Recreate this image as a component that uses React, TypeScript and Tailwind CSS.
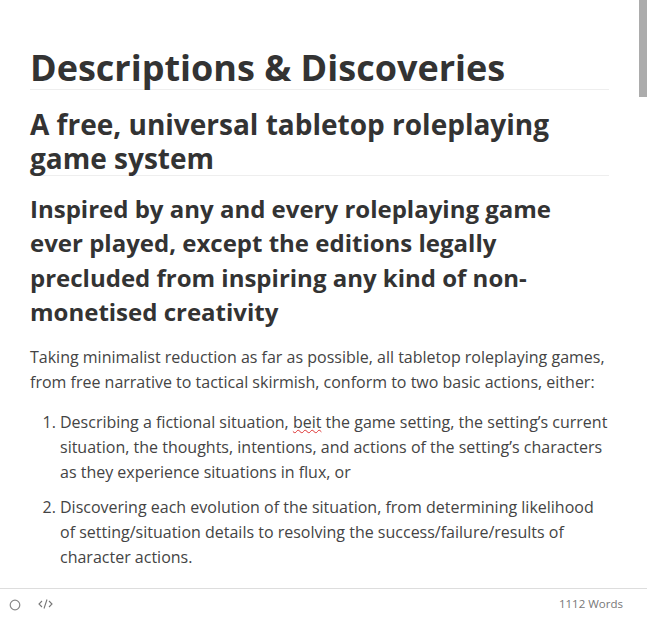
export default function App() {
  return (
    <div className="relative h-[618px] w-[647px] overflow-hidden bg-white flex flex-col font-['Open_Sans',sans-serif] text-[#333333]">
      <div className="absolute right-0 top-0 h-[97px] w-2 bg-[#acacac]" />
      <main className="flex-1 overflow-hidden pl-[30px] pr-[38px] pt-[43px]">
        <h1 className="text-[36px] font-bold leading-[50px] border-b border-[#eeeeee] h-[47px]">Descriptions &amp; Discoveries</h1>
        <h2 className="mt-[17px] text-[28px] font-bold leading-[34px] border-b border-[#eeeeee]">A free, universal tabletop roleplaying game system</h2>
        <h3 className="mt-4 text-[24px] font-bold leading-[34.4px]">Inspired by any and every roleplaying game ever played, except the editions legally precluded from inspiring any kind of non-monetised creativity</h3>
        <p className="mt-[15px] text-[16px] leading-[25px] text-[#444444]">Taking minimalist reduction as far as possible, all tabletop roleplaying games, from free narrative to tactical skirmish, conform to two basic actions, either:</p>
        <ol className="mt-[15px] list-decimal pl-[30px] text-[16px] leading-[25px] text-[#444444]">
          <li>Describing a fictional situation, <span className="underline decoration-wavy decoration-[#d33] decoration-1 underline-offset-1">beit</span> the game setting, the setting’s current situation, the thoughts, intentions, and actions of the setting’s characters as they experience situations in flux, or</li>
          <li className="mt-[10px]">Discovering each evolution of the situation, from determining likelihood of setting/situation details to resolving the success/failure/results of character actions.</li>
        </ol>
      </main>
      <footer className="h-[30px] shrink-0 border-t border-[#dddddd] flex items-center pl-[9px] pr-[24px] text-[#777777]">
        <svg className="mt-[2px]" width="12" height="12" viewBox="0 0 12 12" fill="none" stroke="#888888" strokeWidth="1.2"><circle cx="6" cy="6" r="4.8" /></svg>
        <svg className="ml-[17px] mt-[1px]" width="15" height="12" viewBox="0 0 15 12" fill="none" stroke="#777777" strokeWidth="1.1"><path d="M4 3 1 6l3 3M11 3l3 3-3 3M9 1.5 6 10.5" /></svg>
        <span className="ml-auto text-[11.5px]">1112 Words</span>
      </footer>
    </div>
  );
}
